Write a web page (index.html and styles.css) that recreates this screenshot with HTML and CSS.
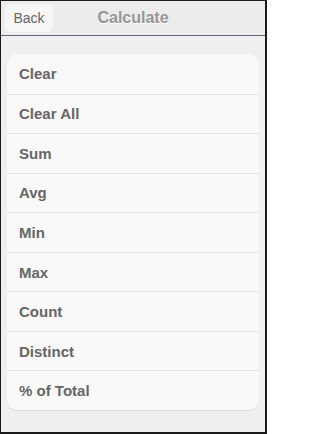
FILE: index.html
```html
<!DOCTYPE html>
<html>
<head>
<meta charset="utf-8">
<link rel="stylesheet" href="styles.css">
</head>
<body>
<div class="screen">
  <header class="header">
    <div class="left"><span class="back">Back</span></div>
    <h1 class="title">Calculate</h1>
    <div class="right"></div>
  </header>
  <ul class="menu">
    <li class="item">Clear</li>
    <li class="item">Clear All</li>
    <li class="item">Sum</li>
    <li class="item">Avg</li>
    <li class="item">Min</li>
    <li class="item">Max</li>
    <li class="item">Count</li>
    <li class="item">Distinct</li>
    <li class="item">% of Total</li>
  </ul>
</div>
</body>
</html>
```
FILE: styles.css
```css
html, body {
  margin: 0;
  padding: 0;
}
body {
  font-family: "Liberation Sans", Arial, sans-serif;
}
.screen {
  width: 267px;
  height: 434px;
  box-sizing: border-box;
  border-style: solid;
  border-color: #1a1a1a;
  border-width: 1px 2px 2px 1px;
  background: #efefef;
  display: flex;
  flex-direction: column;
}
.header {
  height: 35px;
  box-sizing: border-box;
  border-bottom: 1px solid #5b687a;
  background: #ececec;
  display: grid;
  grid-template-columns: 1fr auto 1fr;
  align-items: center;
  padding: 0 4px;
}
.left {
  display: flex;
}
.back {
  display: flex;
  align-items: center;
  justify-content: center;
  width: 48px;
  height: 28px;
  margin-top: -1px;
  border-radius: 5px;
  background: #f6f6f6;
  color: #666;
  font-size: 14px;
}
.title {
  margin: 0 0 1px 0;
  font-size: 16px;
  font-weight: bold;
  color: #959595;
  text-shadow: 0 1px 0 #ffffff;
}
.menu {
  list-style: none;
  margin: 18px 6px 0 6px;
  padding: 0;
  background: #f9f9f9;
  border-radius: 10px;
  box-shadow: 0 1px 0 #dcdcdc;
}
.item {
  height: 39.56px;
  box-sizing: border-box;
  display: flex;
  align-items: center;
  padding-left: 12px;
  font-size: 15px;
  font-weight: bold;
  color: #666;
  border-top: 1px solid #e3e3e3;
}
.item:first-child {
  border-top: none;
}
```
